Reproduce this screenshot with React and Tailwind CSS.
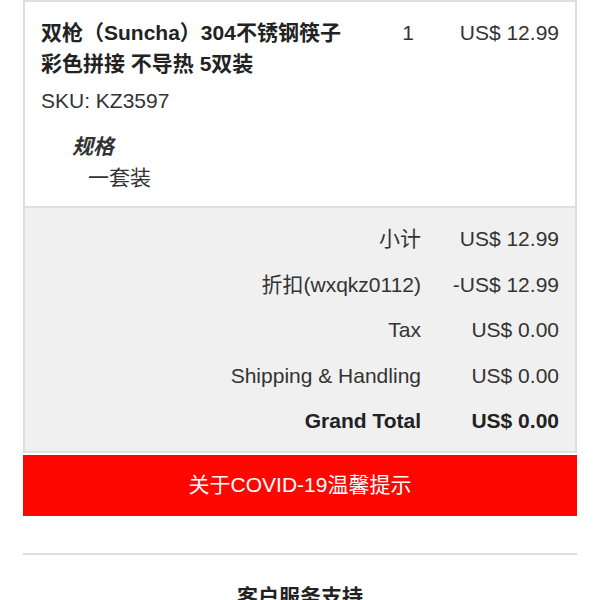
const summary = [
  { label: '小计', value: 'US$ 12.99' },
  { label: '折扣(wxqkz0112)', value: '-US$ 12.99' },
  { label: 'Tax', value: 'US$ 0.00' },
  { label: 'Shipping & Handling', value: 'US$ 0.00' },
  { label: 'Grand Total', value: 'US$ 0.00', bold: true },
];

export default function App() {
  return (
    <div
      className="min-h-screen bg-white text-[#333] text-[21px]"
      style={{ fontFamily: '"Liberation Sans", "Noto Sans CJK SC", sans-serif' }}
    >
      <div className="mx-[23px]">
        <div className="border-2 border-[#dedede]">
          {/* item row */}
          <div className="flex pl-[16px] pr-[16px] pt-[15px] pb-[13px] bg-white border-b-2 border-[#dedede]">
            <div className="w-[320px] shrink-0">
              <div className="font-bold leading-[31px] text-[#222] whitespace-nowrap">
                双枪（Suncha）304不锈钢筷子
                <br />
                彩色拼接 不导热 5双装
              </div>
              <div className="mt-[7px] leading-[30px]">SKU: KZ3597</div>
              <div className="mt-[15px] pl-[31px] font-bold italic leading-[31px]">规格</div>
              <div className="pl-[47px] leading-[31px]">一套装</div>
            </div>
            <div className="w-[94px] text-center leading-[31px]">1</div>
            <div className="flex-1 text-right leading-[31px]">US$ 12.99</div>
          </div>

          {/* totals */}
          <div className="bg-[#f0f0f0] pt-[8px] pb-[7px] pr-[16px]">
            {summary.map((row) => (
              <div
                key={row.label}
                className={`flex items-center justify-end h-[45.5px] ${row.bold ? 'font-bold text-[#222]' : ''}`}
              >
                <span className="text-right">{row.label}</span>
                <span className="w-[138px] text-right">{row.value}</span>
              </div>
            ))}
          </div>
        </div>

        <button className="mt-[2px] w-full h-[61px] bg-[#fe0700] text-white text-[21px] flex items-center justify-center">
          关于COVID-19温馨提示
        </button>

        <div className="mt-[37px] border-t-2 border-[#dedede]" />

        <div className="pt-[26px] text-center font-bold text-[21px] text-[#222]">客户服务支持</div>
      </div>
    </div>
  );
}
